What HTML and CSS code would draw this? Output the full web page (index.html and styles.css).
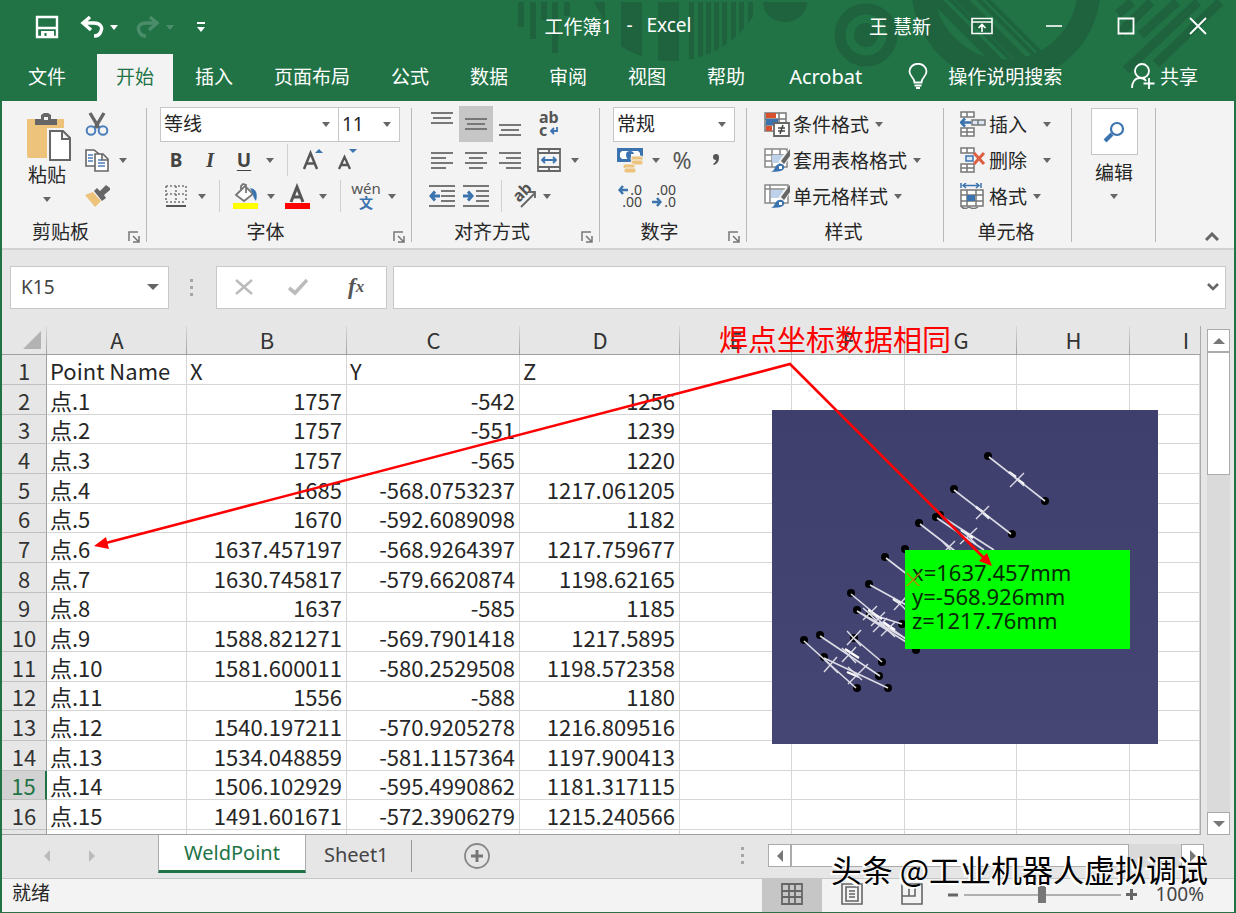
FILE: index.html
```html
<!DOCTYPE html>
<html lang="zh-CN">
<head>
<meta charset="utf-8">
<title>工作簿1 - Excel</title>
<link rel="stylesheet" href="styles.css">
</head>
<body>
<div class="window">
  <header class="top">
    <svg class="decor" width="720" height="101" viewBox="516 0 720 101" aria-hidden="true">
      <defs>
        <clipPath id="bowl"><circle cx="672" cy="-35" r="96"/></clipPath>
        <clipPath id="ring"><circle cx="1006" cy="-12" r="72"/></clipPath>
      </defs>
      <g fill="#1e633d">
        <path d="M518 2h6v25h-6zM530 2h6v37h-6zM541 2h6v18h-6zM552 2h6v51h-6zM564 2h6v14h-6zM594 2h11v20z"/>
        <g clip-path="url(#bowl)"><path d="M621 2h21v70h-21zM658 2h21v70h-21zM689 2h5v70h-5zM698 2h5v70h-5zM706 2h5v70h-5zM714 2h5v70h-5zM722 2h5v70h-5zM731 2h5v70h-5zM739 2h5v70h-5zM748 2h5v70h-5z"/></g>
        <path d="M763 2h44a22 20 0 0 1-44 0z"/>
        <circle cx="866" cy="35" r="12"/>
      </g>
      <circle cx="866" cy="35" r="26" fill="none" stroke="#1e633d" stroke-width="11"/>
      <circle cx="1006" cy="-12" r="83" fill="none" stroke="#1e633d" stroke-width="23"/>
      <g clip-path="url(#ring)" stroke="#1e633d">
        <path stroke-width="10" d="M932-4l90 90M958-4l90 90"/>
        <path stroke-width="4" d="M947-4l90 90M975-4l90 90M984-4l90 90"/>
      </g>
      <g stroke="#1e633d" fill="none">
        <path stroke-width="9" d="M1132 2l-14 12M1151 2l-32 32M1177 2l-36 33M1198 2l-72 68M1220 2l-64 62"/>
      </g>
    </svg>
    <div class="titlebar">
      <div class="quick">
        <button class="save" aria-label="保存"><svg width="24" height="24" viewBox="0 0 24 24" fill="none" stroke="#fff" stroke-width="2.400"><path d="M2 2h20v20H2zM2 13h20"/><path fill="#fff" stroke="none" d="M6 16h13v6H6z"/><path stroke="#217346" d="M10.500 18v3" stroke-width="2"/></svg></button>
        <button class="undo" aria-label="撤消"><svg width="24" height="24" viewBox="0 0 24 24" fill="none" stroke="#fff" stroke-width="3.400"><path d="M10 2L3 8l8 7M3 8h11c6 0 9 4 7 8-1 4-4 5-7 5"/></svg></button>
        <button class="mini" aria-label="撤消选项"><i class="caret light"></i></button>
        <button class="undo redo" aria-label="恢复"><svg width="24" height="24" viewBox="0 0 24 24" fill="none" stroke="#4b8d6a" stroke-width="3.400"><path d="M14 2l7 6-8 7M21 8H10C4 8 1 12 3 16c1 4 4 5 7 5"/></svg></button>
        <button class="mini" aria-label="恢复选项"><i class="caret faded"></i></button>
        <button class="custom" aria-label="自定义快速访问工具栏"><svg width="10" height="10" viewBox="0 0 10 10" fill="#fff"><path d="M1 0h8v2H1zM1 5h8L5 10z"/></svg></button>
      </div>
      <h1 class="title"><span>工作簿1</span><span>-</span><span>Excel</span></h1>
      <div class="system">
        <span class="user">王 慧新</span>
        <button aria-label="功能区显示选项"><svg width="22" height="18" viewBox="0 0 22 18" fill="none" stroke="#fff" stroke-width="1.600"><path d="M1 1.500h20v15H1zM1 5h20M11 15V8M7.500 11L11 7.500l3.500 3.500"/></svg></button>
        <button aria-label="最小化"><svg width="18" height="18" viewBox="0 0 18 18" stroke="#fff" stroke-width="1.600"><path d="M1 9h16"/></svg></button>
        <button aria-label="最大化"><svg width="18" height="18" viewBox="0 0 18 18" fill="none" stroke="#fff" stroke-width="1.800"><path d="M1.500 1.500h15v15h-15z"/></svg></button>
        <button aria-label="关闭"><svg width="18" height="18" viewBox="0 0 18 18" stroke="#fff" stroke-width="1.800"><path d="M1 1l16 16M17 1L1 17"/></svg></button>
      </div>
    </div>
    <nav class="tabs">
      <button class="file">文件</button>
      <button class="active">开始</button>
      <button>插入</button>
      <button>页面布局</button>
      <button>公式</button>
      <button>数据</button>
      <button>审阅</button>
      <button>视图</button>
      <button>帮助</button>
      <button class="latin">Acrobat</button>
      <button class="tell"><svg width="20" height="26" viewBox="0 0 20 26" fill="none" stroke="#fff" stroke-width="1.800"><path d="M6.500 19.500c0-5-5-6-5-11a8.200 7.500 0 0 1 17 0c0 5-5 6-5 11zM6.500 22.500h7M8 25h4"/></svg>操作说明搜索</button>
      <button class="share"><svg width="24" height="26" viewBox="0 0 24 26" fill="none" stroke="#fff" stroke-width="1.800"><circle cx="11" cy="8" r="7"/><path d="M1 25c0-6 3-10 8-10 3 0 5 1 6 3M18 15v11M12.500 20.500h11"/></svg>共享</button>
    </nav>
  </header>

  <section class="ribbon" aria-label="开始">
    <div class="group clipboard">
      <div class="clip">
        <button class="paste">
          <svg width="46" height="48" viewBox="0 0 46 48"><path fill="#edc37c" d="M1 6h37v39H3a2 2 0 0 1-2-2z"/><path fill="#666" d="M9 12V6h6V2l3-2h4l3 2v4h6v6z"/><path fill="#f3f3f3" d="M18 4h4v3h-4z"/><path fill="#fff" stroke="#f3f3f3" stroke-width="6" d="M24 18h13l7 7v22H24z"/><path fill="#fff" stroke="#666" stroke-width="2" d="M24 18h13l7 7v22H24zM36 18v8h8"/></svg>
          <span>粘贴</span><i class="caret"></i>
        </button>
        <div class="stack">
          <div class="row"><button aria-label="剪切"><svg width="24" height="24" viewBox="0 0 24 24" fill="none"><path stroke="#666" stroke-width="3.400" d="M5 1l9 15M19 1l-9 15"/><circle cx="6" cy="18.500" r="4.300" stroke="#4a7ebb" stroke-width="2"/><circle cx="18" cy="18.500" r="4.300" stroke="#4a7ebb" stroke-width="2"/></svg></button></div>
          <div class="row"><button aria-label="复制"><svg width="24" height="24" viewBox="0 0 24 24" fill="#fff" stroke="#666" stroke-width="1.600"><path d="M1 2h8l5 4v12H1z"/><path stroke="#4a7ebb" d="M3 7h5M3 10h5M3 13h5"/><path d="M10 6h8l5 5v12H10zM17 6v6h6"/><path stroke="#4a7ebb" d="M13 12h4M13 15h7M13 18h7"/></svg></button><button class="mini" aria-label="复制选项"><i class="caret"></i></button></div>
          <div class="row"><button aria-label="格式刷"><svg width="26" height="24" viewBox="0 0 26 24"><path fill="#edc37c" d="M1 11l8-3 8 9-6 6z"/><path fill="#666" d="M10 7l3-3 3 3 6-6 4 3v2l-6 5 2 3-4 3z"/></svg></button></div>
        </div>
      </div>
      <footer>剪贴板<button class="launch" aria-label="剪贴板选项"><svg width="12" height="12" viewBox="0 0 12 12" fill="none" stroke="#777" stroke-width="1.500"><path d="M1 10V1h9M5 5l6 6M11 5v6H5"/></svg></button></footer>
    </div>

    <div class="group font">
      <div class="row">
        <label class="pick family"><select aria-label="字体"><option>等线</option></select></label><label class="pick size"><select aria-label="字号"><option>11</option></select></label>
      </div>
      <div class="row">
        <button class="letter bold">B</button><button class="letter italic">I</button><button class="letter under">U</button><button class="mini" aria-label="下划线选项"><i class="caret"></i></button><span class="sep"></span>
        <button aria-label="增大字号"><svg width="22" height="24" viewBox="0 0 22 24"><path fill="none" stroke="#555" stroke-width="2.500" d="M2 21L8.500 5l6.500 16M4.500 15.500h8"/><path fill="#3b73af" d="M13 5l4-4 4 4z"/></svg></button><button aria-label="减小字号"><svg width="22" height="24" viewBox="0 0 22 24"><path fill="none" stroke="#555" stroke-width="2.300" d="M3 21L8.500 9 14 21M5 17h7"/><path fill="#3b73af" d="M13 1h8l-4 4z"/></svg></button>
      </div>
      <div class="row">
        <button aria-label="边框"><svg width="22" height="22" viewBox="0 0 22 22" fill="none" stroke="#777" stroke-width="1.600"><path stroke-dasharray="2 2" d="M1 1h20v16M1 1v16M11 1v16M1 9h20M1 17h20"/><path stroke="#555" stroke-width="2" d="M1 21h20"/></svg></button><button class="mini" aria-label="边框选项"><i class="caret"></i></button><span class="sep"></span>
        <button aria-label="填充颜色"><svg width="26" height="26" viewBox="0 0 26 26"><path fill="#fff" stroke="#777" stroke-width="1.800" d="M4 12l9-9 8 8-9 7zM9 8V3l2-2 3 1v8"/><path fill="#3b73af" d="M18 5c6 1 8 5 6 13-2-2-3-5-3-7z"/><path fill="#ff0" d="M1 20h25v6H1z"/></svg></button><button class="mini" aria-label="填充颜色选项"><i class="caret"></i></button>
        <button aria-label="字体颜色"><svg width="26" height="26" viewBox="0 0 26 26"><path fill="none" stroke="#555" stroke-width="3" d="M7 19l6-15 6 15M9 14h8"/><path fill="red" d="M1 20h25v6H1z"/></svg></button><button class="mini" aria-label="字体颜色选项"><i class="caret"></i></button><span class="sep"></span>
        <button class="pinyin"><small>wén</small><b>文</b></button><button class="mini" aria-label="拼音选项"><i class="caret"></i></button>
      </div>
      <footer>字体<button class="launch" aria-label="字体选项"><svg width="12" height="12" viewBox="0 0 12 12" fill="none" stroke="#777" stroke-width="1.500"><path d="M1 10V1h9M5 5l6 6M11 5v6H5"/></svg></button></footer>
    </div>

    <div class="group align">
      <div class="row">
        <button aria-label="顶端对齐"><svg class="lines" width="22" height="26" viewBox="0 0 22 26"><path d="M0 2h22M2 7h18M0 12h22"/></svg></button><button class="pressed" aria-label="垂直居中"><svg class="lines" width="22" height="26" viewBox="0 0 22 26"><path d="M0 8h22M2 13h18M0 18h22"/></svg></button><button aria-label="底端对齐"><svg class="lines" width="22" height="26" viewBox="0 0 22 26"><path d="M0 14h22M2 19h18M0 24h22"/></svg></button>
        <button class="wrap" aria-label="自动换行"><span>ab</span><span>c<svg width="8" height="8" viewBox="0 0 8 8" fill="none" stroke="#3b73af" stroke-width="1.800"><path d="M7 0v4H2M4 1L1 4l3 3"/></svg></span></button>
      </div>
      <div class="row">
        <button aria-label="左对齐"><svg class="lines" width="22" height="18" viewBox="0 0 22 18"><path d="M0 2h22M0 7h15M0 12h22M0 17h15"/></svg></button><button aria-label="居中"><svg class="lines" width="22" height="18" viewBox="0 0 22 18"><path d="M0 2h22M4 7h14M0 12h22M4 17h14"/></svg></button><button aria-label="右对齐"><svg class="lines" width="22" height="18" viewBox="0 0 22 18"><path d="M0 2h22M7 7h15M0 12h22M7 17h15"/></svg></button>
        <button class="merge" aria-label="合并后居中"><svg width="24" height="24" viewBox="0 0 24 24" fill="none" stroke="#666" stroke-width="1.800"><path d="M1 1h22v22H1zM1 5h22M1 19h22M12 1v4M12 19v4"/><path stroke="#3b73af" d="M5 12h14M8 9l-3 3 3 3M16 9l3 3-3 3"/></svg></button><button class="mini" aria-label="合并选项"><i class="caret"></i></button>
      </div>
      <div class="row">
        <button aria-label="减少缩进量"><svg width="26" height="22" viewBox="0 0 26 22" fill="none" stroke="#777" stroke-width="1.800"><path d="M0 1h26M12 6h14M12 11h14M12 16h14M0 21h26"/><path stroke="#3b73af" stroke-width="3" d="M2 11h9M6 6.500L2 11l4 4.500"/></svg></button><button aria-label="增加缩进量"><svg width="26" height="22" viewBox="0 0 26 22" fill="none" stroke="#777" stroke-width="1.800"><path d="M0 1h26M13 6h13M13 11h13M13 16h13M0 21h26"/><path stroke="#3b73af" stroke-width="3" d="M0 11h9M5 6.500L9 11l-4 4.500"/></svg></button><span class="sep"></span>
        <button class="orient" aria-label="方向"><svg width="26" height="26" viewBox="0 0 26 26"><text x="0" y="0" font-size="16" font-weight="bold" fill="#555" transform="translate(8 20) rotate(-45)">ab</text><path fill="none" stroke="#666" stroke-width="1.800" d="M10 24L24 10M18 9h6v6"/></svg></button><button class="mini" aria-label="方向选项"><i class="caret"></i></button>
      </div>
      <footer>对齐方式<button class="launch" aria-label="对齐选项"><svg width="12" height="12" viewBox="0 0 12 12" fill="none" stroke="#777" stroke-width="1.500"><path d="M1 10V1h9M5 5l6 6M11 5v6H5"/></svg></button></footer>
    </div>

    <div class="group number">
      <div class="row"><label class="pick format"><select aria-label="数字格式"><option>常规</option></select></label></div>
      <div class="row">
        <button aria-label="会计数字格式"><svg width="26" height="26" viewBox="0 0 26 26"><path fill="#3b73af" d="M0 1h26v14H0z"/><path fill="#fff" d="M5 4h16l2 2v4l-2 2H5l-2-2V6z"/><path fill="#3b73af" d="M9 8a4 4 0 0 1 8 0c0 3-2 5-4 5s-4-2-4-5z"/><path fill="#fff" d="M14 7h3v3h-3z"/><g fill="#edc37c" stroke="#f3f3f3"><rect x="14" y="9" width="12" height="5" rx="2"/><rect x="14" y="13" width="12" height="5" rx="2"/><rect x="6" y="17" width="12" height="5" rx="2"/><rect x="7" y="21" width="12" height="5" rx="2"/></g></svg></button><button class="mini" aria-label="会计格式选项"><i class="caret"></i></button>
        <button class="percent">%</button><button class="comma" aria-label="千位分隔"><svg width="8" height="12" viewBox="0 0 8 12"><path fill="#555" d="M1 3a3 3 0 0 1 6 0c0 5-2 7-5 8l-1-1c2-1 3-3 3-4-2 0-3-1-3-3z"/></svg></button>
      </div>
      <div class="row">
        <button class="decimal" aria-label="增加小数位数"><span><svg width="10" height="10" viewBox="0 0 10 10" fill="none" stroke="#3b73af" stroke-width="2.400"><path d="M2 5h8M5 1L1.500 5 5 9"/></svg>.0</span><span>.00</span></button><button class="decimal" aria-label="减少小数位数"><span>.00</span><span><svg width="10" height="10" viewBox="0 0 10 10" fill="none" stroke="#3b73af" stroke-width="2.400"><path d="M0 5h8M5 1l3.500 4L5 9"/></svg>.0</span></button>
      </div>
      <footer>数字<button class="launch" aria-label="数字选项"><svg width="12" height="12" viewBox="0 0 12 12" fill="none" stroke="#777" stroke-width="1.500"><path d="M1 10V1h9M5 5l6 6M11 5v6H5"/></svg></button></footer>
    </div>

    <div class="group styles">
      <div class="row"><button class="named"><svg width="26" height="26" viewBox="0 0 26 26"><path fill="#fff" stroke="#777" stroke-width="1.500" d="M1 2h21v18H1zM1 8h21M1 14h21M15 2v18"/><path fill="#d9502e" d="M2 2h10v5H2zM2 15h6v5H2z"/><path fill="#3b73af" d="M2 8h12v6H2z"/><path fill="#fff" stroke="#666" stroke-width="1.800" d="M10 12h15v13H10z"/><path fill="none" stroke="#444" stroke-width="1.500" d="M14 17h7M14 20h7M19 14l-3 9"/></svg>条件格式<i class="caret"></i></button></div>
      <div class="row"><button class="named"><svg width="26" height="26" viewBox="0 0 26 26"><path fill="#fff" stroke="#888" stroke-width="1.500" d="M1 2h22v18H1zM1 8h22M1 14h22M8 2v18M16 2v18"/><path fill="#bdd2ea" d="M8 8h11v8H8z"/><path stroke="#f3f3f3" stroke-width="7" d="M25 6L17 17"/><path fill="#666" d="M26 2v7l-6 8-3-3z"/><path fill="#3b73af" d="M7 25c3-1 3-3 5-6s7-3 8 0-1 6-13 6z"/><path fill="#fff" d="M15 19h3v3h-3z"/></svg>套用表格格式<i class="caret"></i></button></div>
      <div class="row"><button class="named"><svg width="26" height="26" viewBox="0 0 26 26"><path fill="#fff" stroke="#888" stroke-width="1.500" d="M1 2h23v18H1zM1 6h23M6 2v18"/><path fill="#bdd2ea" d="M7 7h12v8H7z"/><path stroke="#f3f3f3" stroke-width="7" d="M25 6L17 17"/><path fill="#666" d="M26 2v7l-6 8-3-3z"/><path fill="#3b73af" d="M7 25c3-1 3-3 5-6s7-3 8 0-1 6-13 6z"/><path fill="#fff" d="M15 19h3v3h-3z"/></svg>单元格样式<i class="caret"></i></button></div>
      <footer>样式</footer>
    </div>

    <div class="group cells">
      <div class="row"><button class="named wide"><svg width="26" height="26" viewBox="0 0 26 26" fill="#fff" stroke="#777" stroke-width="1.500"><path d="M1 1h13v5H1zM7 1v5M1 17h13v8H1zM7 17v8M1 21h13"/><path fill="#dce8f5" d="M12 9h13v5H12zM18 9v5"/><path fill="none" stroke="#3b73af" stroke-width="2.500" d="M1 11.500h10M5 7.500l-4 4 4 4"/></svg>插入<i class="caret"></i></button></div>
      <div class="row"><button class="named wide"><svg width="26" height="26" viewBox="0 0 26 26" fill="#fff" stroke="#777" stroke-width="1.500"><path d="M1 1h13v5H1zM7 1v5M1 17h13v8H1zM7 17v8M1 21h13"/><path fill="#dce8f5" stroke="#3b73af" d="M6 9h7v5H6z"/><path fill="none" stroke="#dd5f43" stroke-width="3" d="M14 6l10 11M24 6L14 17"/></svg>删除<i class="caret"></i></button></div>
      <div class="row"><button class="named"><svg width="26" height="26" viewBox="0 0 26 26" fill="#fff" stroke="#777" stroke-width="1.500"><path d="M1 7h22v16H1zM1 12h22M1 18h22M7 7v16M16 7v16"/><path d="M1 23c2 3 5 3 8 1 3 2 6 2 9 0" fill="none"/><path fill="#3b73af" stroke="none" d="M7 12h8v6H7z"/><path stroke="#3b73af" fill="none" d="M1 0v5M21 0v5M3 2.500h16M6 0L3 2.500 6 5M16 0l3 2.500L16 5"/></svg>格式<i class="caret"></i></button></div>
      <footer>单元格</footer>
    </div>

    <div class="group edit">
      <button class="find"><span class="lens"><svg width="22" height="22" viewBox="0 0 22 22" fill="none" stroke="#3b73af"><circle cx="14" cy="8" r="6" stroke-width="2.200"/><path stroke-width="4" d="M2 20l7-7"/></svg></span>编辑<i class="caret"></i></button>
    </div>
    <button class="collapse" aria-label="折叠功能区"><svg width="14" height="10" viewBox="0 0 14 10" fill="none" stroke="#666" stroke-width="3"><path d="M1 8l6-6 6 6"/></svg></button>
  </section>

  <section class="formula">
    <div class="namebox"><input aria-label="名称框" value="K15"><i class="caret big"></i></div>
    <span class="dots"><i></i><i></i><i></i></span>
    <div class="actions">
      <button aria-label="取消"><svg width="18" height="16" viewBox="0 0 18 16" stroke="#bbb" stroke-width="2.400"><path d="M1 1l16 14M17 1L1 15"/></svg></button>
      <button aria-label="输入"><svg width="20" height="18" viewBox="0 0 20 18" fill="none" stroke="#bbb" stroke-width="3.600"><path d="M1 10l6 5L19 2"/></svg></button>
      <button class="fx" aria-label="插入函数">f<small>x</small></button>
    </div>
    <div class="entry"><input aria-label="编辑栏"><svg width="12" height="8" viewBox="0 0 12 8" fill="none" stroke="#666" stroke-width="2.600"><path d="M1 1l5 5 5-5"/></svg></div>
  </section>

  <main class="workspace">
    <div class="sheet">
      <table>
        <colgroup><col class="c-num"><col class="c-a"><col class="c-b"><col class="c-c"><col class="c-b"><col class="c-e"><col class="c-f"><col class="c-e"><col class="c-f"><col></colgroup>
        <thead><tr><th class="corner"></th><th>A</th><th>B</th><th>C</th><th>D</th><th>E</th><th>F</th><th>G</th><th>H</th><th class="cut">I</th></tr></thead>
        <tbody>
          <tr><th>1</th><td>Point Name</td><td class="t">X</td><td class="t">Y</td><td class="t">Z</td><td></td><td></td><td></td><td></td><td></td></tr>
          <tr><th>2</th><td>点.1</td><td>1757</td><td>-542</td><td>1256</td><td></td><td></td><td></td><td></td><td></td></tr>
          <tr><th>3</th><td>点.2</td><td>1757</td><td>-551</td><td>1239</td><td></td><td></td><td></td><td></td><td></td></tr>
          <tr><th>4</th><td>点.3</td><td>1757</td><td>-565</td><td>1220</td><td></td><td></td><td></td><td></td><td></td></tr>
          <tr><th>5</th><td>点.4</td><td>1685</td><td>-568.0753237</td><td>1217.061205</td><td></td><td></td><td></td><td></td><td></td></tr>
          <tr><th>6</th><td>点.5</td><td>1670</td><td>-592.6089098</td><td>1182</td><td></td><td></td><td></td><td></td><td></td></tr>
          <tr><th>7</th><td>点.6</td><td>1637.457197</td><td>-568.9264397</td><td>1217.759677</td><td></td><td></td><td></td><td></td><td></td></tr>
          <tr><th>8</th><td>点.7</td><td>1630.745817</td><td>-579.6620874</td><td>1198.62165</td><td></td><td></td><td></td><td></td><td></td></tr>
          <tr><th>9</th><td>点.8</td><td>1637</td><td>-585</td><td>1185</td><td></td><td></td><td></td><td></td><td></td></tr>
          <tr><th>10</th><td>点.9</td><td>1588.821271</td><td>-569.7901418</td><td>1217.5895</td><td></td><td></td><td></td><td></td><td></td></tr>
          <tr><th>11</th><td>点.10</td><td>1581.600011</td><td>-580.2529508</td><td>1198.572358</td><td></td><td></td><td></td><td></td><td></td></tr>
          <tr><th>12</th><td>点.11</td><td>1556</td><td>-588</td><td>1180</td><td></td><td></td><td></td><td></td><td></td></tr>
          <tr><th>13</th><td>点.12</td><td>1540.197211</td><td>-570.9205278</td><td>1216.809516</td><td></td><td></td><td></td><td></td><td></td></tr>
          <tr><th>14</th><td>点.13</td><td>1534.048859</td><td>-581.1157364</td><td>1197.900413</td><td></td><td></td><td></td><td></td><td></td></tr>
          <tr class="current"><th>15</th><td>点.14</td><td>1506.102929</td><td>-595.4990862</td><td>1181.317115</td><td></td><td></td><td></td><td></td><td></td></tr>
          <tr><th>16</th><td>点.15</td><td>1491.601671</td><td>-572.3906279</td><td>1215.240566</td><td></td><td></td><td></td><td></td><td></td></tr>
          <tr class="partial"><th></th><td></td><td></td><td></td><td></td><td></td><td></td><td></td><td></td><td></td></tr>
        </tbody>
      </table>
      <div class="model">
        <svg width="386" height="334" viewBox="772 410 386 334" fill="none" aria-hidden="true">
          <g fill="#000">
            <circle cx="988" cy="456" r="4"/><circle cx="1045" cy="501" r="4"/><circle cx="954" cy="489" r="4"/><circle cx="1012" cy="534" r="4"/><circle cx="936" cy="517" r="4"/><circle cx="940" cy="515" r="4"/><circle cx="919" cy="523" r="4"/><circle cx="905" cy="549" r="4"/><circle cx="885" cy="557" r="4"/><circle cx="869" cy="584" r="4"/><circle cx="851" cy="593" r="4"/><circle cx="857" cy="610" r="4"/><circle cx="870" cy="614" r="4"/><circle cx="902" cy="624" r="4"/><circle cx="916" cy="650" r="4"/><circle cx="854" cy="638" r="4"/><circle cx="882" cy="662" r="4"/><circle cx="820" cy="635" r="4"/><circle cx="804" cy="640" r="4"/><circle cx="824" cy="657" r="4"/><circle cx="857" cy="688" r="4"/><circle cx="888" cy="688" r="4"/><circle cx="879" cy="676" r="4"/>
          </g>
          <g stroke="#dcdce6" stroke-width="1.600">
            <path d="M989 457l56 44M954 490l57 44M937 518l47 32M941 516l53 34M920 524l35 27M886 558l22 17M870 585l40 22M851 594l24 20M857 611l55 31M870 614l32 10M857 611l57 36M804 641l52 47M820 636l60 40M855 639l27 23M824 658l64 30M885 624l25 18"/>
            <path stroke="#fff" stroke-width="2.400" d="M1009 472l7 5M1017 479l7 5M976 507l7 5M983 513l6 5M961 530l12 8M893 599l8 5M868 610l14 9M883 622l12 8M845 649l14 9M847 672l12 5"/>
          </g>
          <g stroke="#dcdce6" stroke-width="1.400">
            <path d="M1010 487l14-14M1010 473l14 13M976 519l13-13M976 506l13 13M960 544l17-16M961 529l15 15M942 554l13-13M942 541l12 13M894 610l12-13M894 598l12 12M863 620l14-14M863 608l14 13M871 626l14-14M871 612l14 14M881 636l14-14M879 622l16 15M847 645l14-15M847 631l14 15M842 662l14-15M842 648l14 15M824 672l13-15M824 659l14 14M848 684l20-20M848 667l14 13M873 632l14-14"/>
          </g>
        </svg>
        <p class="tip">x=1637.457mm<br>y=-568.926mm<br>z=1217.76mm</p>
      </div>
      <svg class="arrows" width="1000" height="260" viewBox="2 326 1000 260" aria-hidden="true">
        <path stroke="#b58a00" stroke-width="1.400" d="M906 587l14-14M907 573l13 14"/>
        <path fill="none" stroke="#f00" stroke-width="2.600" d="M102 544L790 364l197 197"/>
        <path fill="#f00" d="M94 546l12-9 3 12zM992 566l-13-5 8-8z"/>
      </svg>
      <p class="note">焊点坐标数据相同</p>
    </div>
    <div class="vscroll">
      <button aria-label="向上滚动"><i class="tri up"></i></button>
      <div class="vthumb"></div>
      <button class="last" aria-label="向下滚动"><i class="tri down"></i></button>
    </div>
  </main>

  <div class="sheetbar">
    <button class="nav" aria-label="上一个"><i class="tri left pale"></i></button>
    <button class="nav" aria-label="下一个"><i class="tri right pale"></i></button>
    <button class="sheettab on">WeldPoint</button>
    <button class="sheettab">Sheet1</button>
    <span class="bar"></span>
    <button class="add" aria-label="新工作表"><svg width="26" height="26" viewBox="0 0 26 26" fill="none" stroke="#888" stroke-width="1.800"><circle cx="13" cy="13" r="12"/><path stroke="#777" stroke-width="3" d="M13 7v12M7 13h12"/></svg></button>
    <span class="dots"><i></i><i></i><i></i></span>
    <div class="hscroll">
      <button aria-label="向左滚动"><i class="tri left"></i></button>
      <div class="hthumb"></div>
      <button aria-label="向右滚动"><i class="tri right"></i></button>
    </div>
  </div>

  <footer class="status">
    <span class="ready">就绪</span>
    <button class="view on" aria-label="普通"><svg width="22" height="22" viewBox="0 0 22 22" fill="none" stroke="#666" stroke-width="1.800"><path d="M1 1h20v20H1zM8 1v20M14 1v20M1 8h20M1 14h20"/></svg></button>
    <button class="view" aria-label="页面布局"><svg width="22" height="22" viewBox="0 0 22 22" fill="none" stroke="#666" stroke-width="1.600"><path d="M1 1h20v20H1zM5 4h12v14H5zM8 8h6M8 11h6M8 14h6"/></svg></button>
    <button class="view" aria-label="分页预览"><svg width="22" height="22" viewBox="0 0 22 22" fill="none" stroke="#666" stroke-width="1.600"><path d="M1 1h20v20H1zM1 13h13V1M8 1v12"/></svg></button>
    <button class="zoom" aria-label="缩小"><svg width="10" height="10" viewBox="0 0 10 10" stroke="#666" stroke-width="3"><path d="M0 5h10"/></svg></button>
    <input class="slider" type="range" min="0" max="100" value="50" aria-label="显示比例">
    <button class="zoom" aria-label="放大"><svg width="11" height="11" viewBox="0 0 11 11" stroke="#666" stroke-width="3"><path d="M0 5.500h11M5.500 0v11"/></svg></button>
    <span class="level">100%</span>
  </footer>
  <p class="watermark">头条 @工业机器人虚拟调试</p>
</div>
</body>
</html>
```
FILE: styles.css
```css
* { box-sizing: border-box; }
body { margin: 0; font-family: "Noto Sans", "Noto Sans CJK SC", sans-serif; font-size: 19px; color: #262626; }
button, input, select { font: inherit; color: inherit; border: 0; padding: 0; margin: 0; background: none; border-radius: 0; }
button { display: flex; align-items: center; justify-content: center; flex: none; white-space: nowrap; }
svg { display: block; flex: none; }
p, h1 { margin: 0; font-weight: normal; }

.window { position: relative; min-height: 100vh; display: flex; flex-direction: column; border: 2px solid #217346; border-top: 0; background: #e6e6e6; overflow: hidden; }

.caret { width: 0; height: 0; border: 4px solid transparent; border-top: 5px solid #666; border-bottom: 0; }
.caret.light { border-top-color: #fff; }
.caret.faded { border-top-color: #4b8d6a; }
.caret.big { border-width: 6px 6px 0; }

/* title bar and tabs */
.top { position: relative; background: #217346; color: #fff; }
.decor { position: absolute; top: 0; right: -2px; }
.titlebar { position: relative; display: grid; grid-template-columns: 1fr auto 1fr; align-items: center; height: 54px; padding-bottom: 2px; }
.title { display: flex; gap: 14px; font-size: 19px; }
.quick { display: flex; align-items: center; padding: 2px 0 0 33px; }
.undo { margin-left: 21px; }
.undo.redo { margin-left: 12px; }
.mini { width: 20px; align-self: stretch; }
.custom { margin-left: 16px; }
.system { display: flex; align-items: center; justify-content: flex-end; }
.system .user { margin-right: 15px; }
.system button { width: 72px; height: 52px; }
.tabs { position: relative; display: flex; gap: 3px; height: 47px; }
.tabs button { padding: 0 19px 3px; }
.tabs .file { width: 95px; margin-right: -3px; padding: 0 24px 3px 19px; }
.tabs .active { background: #f3f3f3; color: #217346; }
.tabs .latin { padding-left: 22px; font-size: 20px; }
.tabs .tell { padding: 0 0 3px; gap: 20px; margin-left: 24px; }
.tabs .share { padding: 0 36px 3px 0; gap: 5px; margin-left: auto; }

/* ribbon */
.ribbon { display: flex; height: 149px; padding-top: 5px; background: #f3f3f3; border-bottom: 2px solid #d2d2d2; }
.group { position: relative; display: flex; flex-direction: column; flex: none; }
.group::after { content: ""; position: absolute; top: 2px; bottom: 6px; right: 0; width: 1px; background: #b8b8b8; }
.row { display: flex; align-items: center; height: 36px; }
.row button { width: 34px; height: 36px; }
.row .mini { width: 18px; }
.row .named { width: auto; gap: 3px; }
.row .named .caret { margin-left: 3px; }
.row .wide .caret { margin-left: 13px; }
.group footer { position: relative; margin-top: 4px; line-height: 28px; text-align: center; }
.launch { position: absolute; right: 7px; bottom: 3px; }
.sep { width: 1px; height: 32px; margin: 0 8px; background: #d0d0d0; }
.clipboard { width: 145px; }
.clipboard footer { padding-right: 28px; }
.clip { display: flex; padding-left: 22px; }
.paste { flex-direction: column; justify-content: flex-start; padding-top: 7px; height: 108px; width: 46px; }
.paste svg { margin-left: 4px; }
.paste span { line-height: 28px; }
.paste .caret { margin-top: 8px; }
.stack { padding-left: 10px; }
.font { width: 265px; padding-left: 12px; }
.font footer { margin-left: -12px; padding-right: 28px; }
.align { width: 188px; padding-left: 13px; }
.align footer { margin-left: -13px; padding-right: 28px; }
.number { width: 147px; padding-left: 13px; }
.number footer { margin-left: -13px; padding-right: 28px; }
.styles { width: 197px; padding-left: 17px; }
.styles footer { margin-left: -17px; padding-right: 4px; }
.cells { width: 128px; padding-left: 16px; }
.cells footer { margin-left: -16px; padding-right: 4px; }
.edit { width: 84px; align-items: center; }
.pick { position: relative; display: block; height: 35px; border: 1px solid #c6c6c6; background: #fff; }
.pick::after { content: ""; position: absolute; right: 8px; top: 14px; border: 4px solid transparent; border-top: 5px solid #666; border-bottom: 0; }
.pick select { appearance: none; width: 100%; height: 33px; padding-left: 3px; }
.family { width: 179px; margin-left: 1px; }
.size { width: 62px; margin-left: -1px; }
.format { width: 122px; }
.letter { color: #444; font-weight: bold; }
.italic { font-style: italic; font-family: "Liberation Serif", serif; font-size: 21px; }
.under { text-decoration: underline; text-underline-offset: 3px; }
.pinyin { flex-direction: column; color: #555; }
.pinyin small { font-size: 15px; line-height: 13px; }
.pinyin b { color: #3b73af; font-size: 14px; line-height: 15px; }
.lines { stroke: #777; stroke-width: 2; fill: none; }
.pressed { background: #c6c6c6; }
.row .wrap { flex-direction: column; align-items: flex-start; margin-left: 5px; padding-left: 7px; color: #555; font-weight: bold; font-size: 16px; line-height: 13px; }
.wrap span { display: flex; align-items: center; gap: 3px; }
.row .merge { margin-left: 5px; }
.row .orient { width: 28px; }
.orient svg { overflow: visible; }
.percent { color: #555; font-size: 23px; }
.decimal { flex-direction: column; align-items: flex-end; padding-right: 5px; font-size: 14px; line-height: 12px; color: #444; }
.decimal span { display: flex; align-items: center; gap: 2px; }
.find { flex-direction: column; padding-top: 2px; line-height: 36px; }
.lens { display: flex; align-items: center; justify-content: center; width: 47px; height: 47px; border: 1px solid #c6c6c6; background: #fff; }
.find .caret { margin-top: 3px; }
.collapse { margin-left: auto; align-self: flex-end; padding: 0 15px 6px 0; }

/* formula bar */
.formula { display: flex; align-items: center; height: 76px; padding: 0 8px 2px; }
.namebox, .actions, .entry { display: flex; align-items: center; height: 43px; border: 1px solid #c8c8c8; background: #fff; }
.namebox { width: 159px; padding: 0 9px 0 10px; }
.namebox input { flex: 1; min-width: 0; color: #444; }
.dots { display: flex; flex-direction: column; gap: 4px; width: 3px; }
.dots i { width: 3px; height: 3px; background: #a6a6a6; }
.formula .dots { margin: 0 23px 0 21px; }
.actions { width: 171px; margin-right: 6px; justify-content: space-around; }
.fx { width: 24px; font: italic bold 23px "Liberation Serif", serif; color: #555; }
.fx small { font-size: 17px; }
.entry { flex: 1; padding-right: 6px; }
.entry input { flex: 1; min-width: 0; height: 41px; }

/* grid */
.workspace { flex: 1; display: flex; }
.sheet { position: relative; flex: 1; min-width: 0; overflow: hidden; border-bottom: 1px solid #9f9f9f; border-right: 1px solid #ababab; background: #fff; }
table { width: 100%; table-layout: fixed; border-spacing: 0; font-family: "Noto Sans CJK SC", sans-serif; font-size: 22px; line-height: 26px; }
.c-num { width: 45px; }
.c-a { width: 140px; }
.c-b { width: 160px; }
.c-c { width: 173px; }
.c-e { width: 112px; }
.c-f { width: 113px; }
th { padding: 0; font-weight: normal; background: #e6e6e6; color: #333; }
thead th { height: 29px; padding-bottom: 2px; line-height: 26px; border-bottom: 1px solid #9f9f9f; background: linear-gradient(#d8d8d8, #a0a0a0) right / 1px 100% no-repeat #e6e6e6; }
thead .cut { padding-left: 42px; background: #e6e6e6; }
.corner { position: relative; }
.corner::after { content: ""; position: absolute; right: 6px; bottom: 5px; border: 9px solid #b3b3b3; border-top-color: transparent; border-left-color: transparent; }
tbody th { border-right: 1px solid #9f9f9f; border-bottom: 1px solid #c0c0c0; }
td { height: 30px; padding: 0 4px; border-right: 1px solid #d6d6d6; border-bottom: 1px solid #d6d6d6; text-align: right; white-space: nowrap; }
tr:nth-child(3n) td { height: 29px; }
td:nth-child(2), td.t { text-align: left; padding: 0 0 0 3px; }
.current th { background: #d2d2d2; color: #217346; border-right: 2px solid #217346; }
tbody .partial td { height: 4px; border-bottom: 0; }
tbody .partial th { border-bottom: 0; }

/* annotation laid over the cells */
.model { position: absolute; left: 770px; top: 84px; width: 386px; height: 334px; background: linear-gradient(#3f3f6d, #464674); }
.tip { position: absolute; left: 133px; top: 140px; width: 225px; height: 99px; padding: 10px 7px; background: #0f0; color: #062b06; font-size: 22px; line-height: 24px; }
.arrows { position: absolute; left: 0; top: 0; }
.note { position: absolute; left: 717px; top: 0; color: #f00; font: 29px/24px "Noto Sans CJK SC", sans-serif; white-space: nowrap; }

/* scroll bars */
.tri { border: 6px solid transparent; }
.tri.up { border-bottom-color: #777; border-top: 0; }
.tri.down { border-top-color: #777; border-bottom: 0; }
.tri.left { border-right-color: #777; border-left: 0; }
.tri.right { border-left-color: #777; border-right: 0; }
.tri.left.pale { border-right-color: #bbb; }
.tri.right.pale { border-left-color: #bbb; }
.vscroll { display: flex; flex-direction: column; width: 33px; padding: 3px 4px 0 6px; background: linear-gradient(#dadada, #dadada) 6px 3px / 23px 100% no-repeat; }
.vscroll button, .hscroll button { width: 23px; height: 23px; border: 1px solid #ababab; background: #fff; }
.vthumb { height: 123px; border: 1px solid #ababab; background: #fff; }
.vscroll .last { margin-top: auto; }

/* sheet tabs */
.sheetbar { display: flex; align-items: center; height: 44px; padding: 0 30px 2px 0; border-bottom: 1px solid #c6c6c6; }
.nav { width: 45px; }
.nav:first-child { margin-left: 22px; }
.sheettab { height: 38px; padding: 0 18px; font-size: 20px; color: #444; align-self: flex-start; }
.sheettab.on { width: 148px; margin-left: 44px; border: 1px solid #ababab; border-top: 0; border-bottom: 3px solid #217346; background: #fff; color: #217346; }
.bar { width: 1px; height: 32px; background: #999; margin-left: 4px; }
.add { margin-left: 52px; }
.sheetbar > .dots { margin: 0 24px 0 auto; }
.hscroll { display: flex; width: 37%; max-width: 436px; background: #dadada; }
.hthumb { flex: 1; border: 1px solid #ababab; margin-right: 52px; background: #fff; }

/* status bar */
.status { display: flex; align-items: center; height: 33px; padding: 0 30px 0 10px; background: #f3f3f3; }
.ready { margin-right: auto; line-height: 26px; padding-bottom: 5px; }
.view { width: 60px; height: 33px; padding-bottom: 3px; }
.view.on { background: #c6c6c6; }
.zoom { width: 22px; height: 30px; padding-bottom: 2px; }
.slider { appearance: none; width: 157px; height: 17px; margin-bottom: 2px; background: linear-gradient(#b0b0b0, #b0b0b0) center / 100% 2px no-repeat; }
.slider::-webkit-slider-thumb { appearance: none; width: 8px; height: 17px; background: #777; }
.level { padding: 0 0 4px 13px; color: #444; line-height: 26px; }
.watermark { position: absolute; right: 26px; bottom: 23px; color: #000; font: 31px/40px "Noto Sans CJK SC", sans-serif; white-space: nowrap; text-shadow: -2px 2px 0 #fff, -1px 1px 0 #fff; }
```
